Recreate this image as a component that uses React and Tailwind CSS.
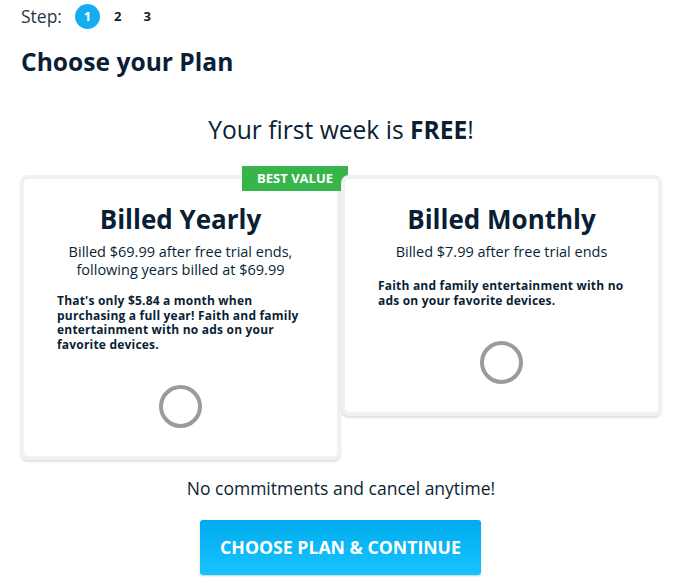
import React from 'react';

const PlanCard = ({ title, lines, desc, badge, descGap }) => {
  return (
    <div className="relative w-[321px] rounded-[8px] border-4 border-[#f1f1f1] bg-white shadow-[0_2px_2px_rgba(0,0,0,0.12)] px-[33px] pt-[20px] pb-[28px] flex flex-col items-center">
      {badge && (
        <div className="absolute top-[-13px] right-[-11px] flex flex-col items-end">
          <div className="bg-[#38b54a] text-white text-[13px] font-bold leading-none px-[15px] py-[6px] uppercase">
            {badge}
          </div>
          <div className="w-0 h-0 border-t-[7px] border-t-[#1b7d2b] border-r-[7px] border-r-transparent" />
        </div>
      )}
      <h2 className="text-[26px] font-bold leading-[40px]">{title}</h2>
      <div className="mt-[4px] text-[14.5px] leading-[18px] text-center whitespace-nowrap">
        {lines.map((l) => (
          <div key={l}>{l}</div>
        ))}
      </div>
      <p className={`${descGap} w-full text-[12px] font-bold leading-[14.5px] tracking-[0.2px]`}>{desc}</p>
      <div className="mt-[33px] w-[43px] h-[43px] rounded-full border-4 border-[#9b9b9b]" />
    </div>
  );
};

export default function App() {
  return (
    <div className="w-[684px] h-[580px] bg-white text-[#0a1f35] font-['Open_Sans',sans-serif] overflow-hidden">
      <div className="pl-[21px] pt-[5px] flex items-center h-[28px]">
        <span className="text-[17.5px] text-[#2a3645]">Step:</span>
        <span className="ml-[13px] w-[25px] h-[25px] rounded-full bg-[#14aef0] text-white text-[13px] font-bold flex items-center justify-center">1</span>
        <span className="ml-[14px] text-[13px] font-bold">2</span>
        <span className="ml-[22px] text-[13px] font-bold">3</span>
      </div>
      <h1 className="pl-[21px] mt-[18px] text-[24.6px] font-bold leading-[32px]">Choose your Plan</h1>
      <p className="mt-[36px] text-center text-[24.6px] leading-[32px] pr-[2px]">
        Your first week is <b className="font-bold">FREE</b>!
      </p>
      <div className="mt-[29px] ml-[20px] flex items-start">
        <PlanCard
          title="Billed Yearly"
          lines={['Billed $69.99 after free trial ends,', 'following years billed at $69.99']}
          desc="That's only $5.84 a month when purchasing a full year! Faith and family entertainment with no ads on your favorite devices."
          badge="Best Value"
          descGap="mt-[15px]"
        />
        <PlanCard
          title="Billed Monthly"
          lines={['Billed $7.99 after free trial ends']}
          desc="Faith and family entertainment with no ads on your favorite devices."
          descGap="mt-[18px]"
        />
      </div>
      <p className="mt-[16px] text-center text-[17.5px] leading-[24px] pr-[2px]">No commitments and cancel anytime!</p>
      <div className="mt-[20px] flex justify-center pr-[3px]">
        <button className="w-[281px] h-[55px] rounded-[3px] bg-[linear-gradient(to_bottom,#00aced,#17c3ff)] shadow-[0_1px_2px_rgba(0,0,0,0.2)] text-white text-[17.7px] font-bold uppercase">
          Choose Plan &amp; Continue
        </button>
      </div>
    </div>
  );
}
